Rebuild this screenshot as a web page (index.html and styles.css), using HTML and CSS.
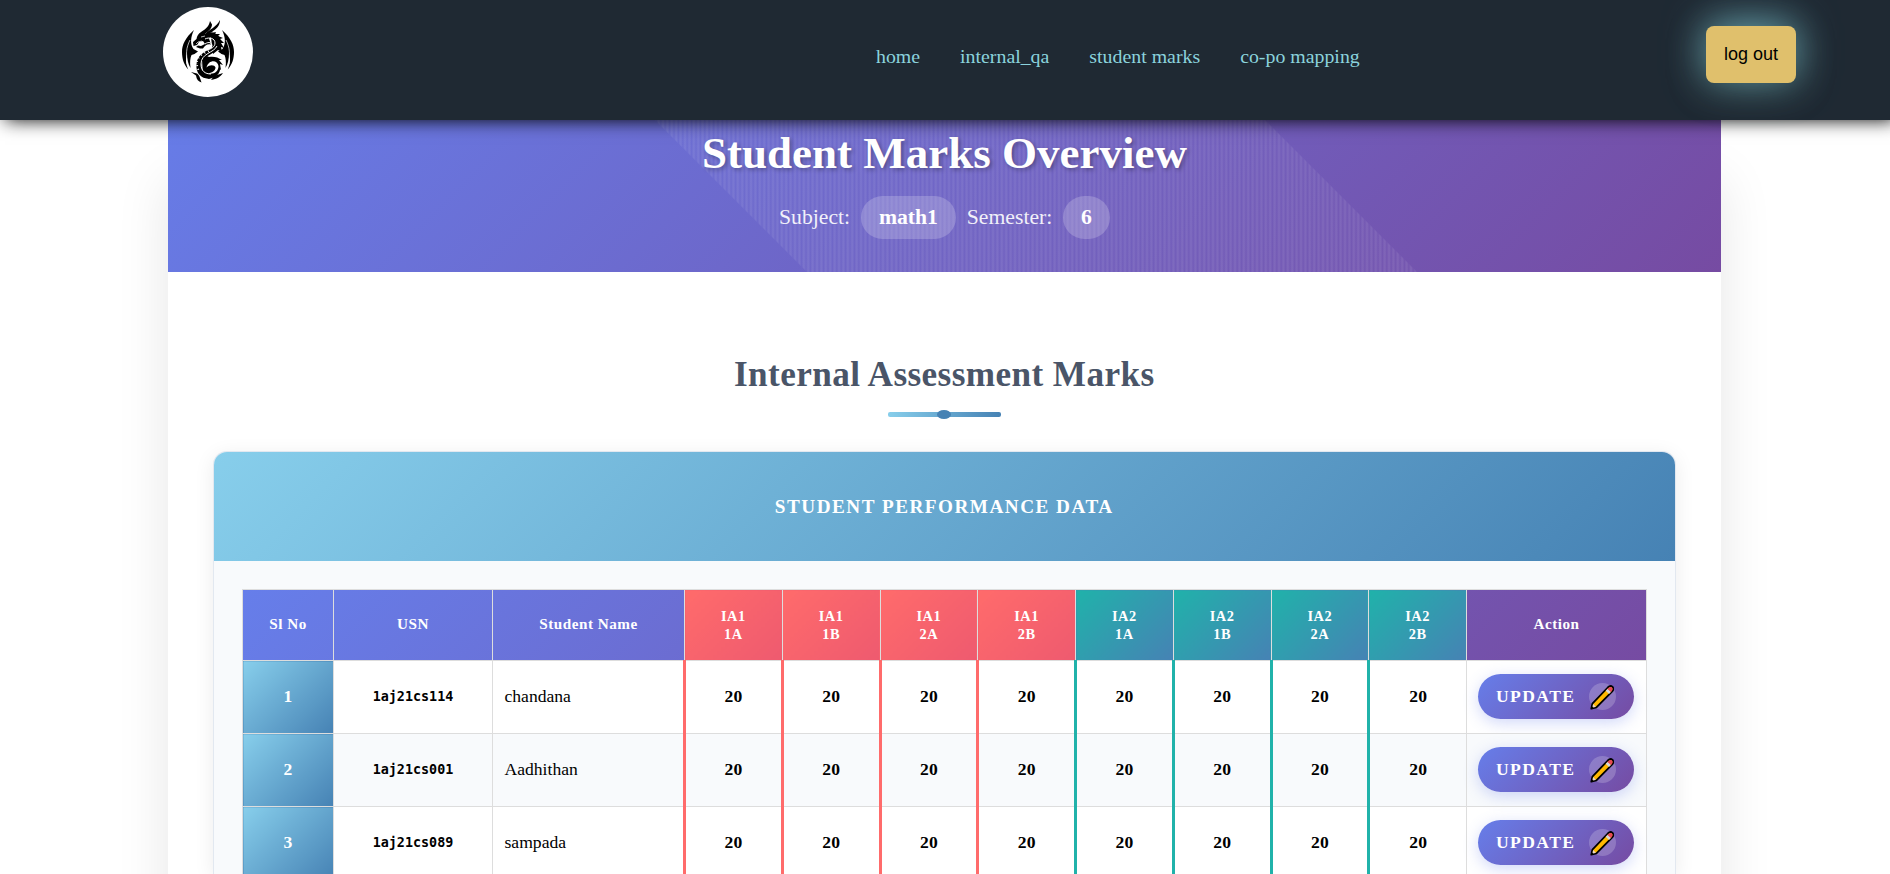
FILE: index.html
```html
<!DOCTYPE html>
<html lang="en">
<head>
<meta charset="utf-8">
<title>Student Marks Overview</title>
<link rel="stylesheet" href="styles.css">
</head>
<body>
<svg class="defs" width="0" height="0" aria-hidden="true">
  <symbol id="pencil" viewBox="0 0 24 25">
    <path d="M1.300 23.700 2.400 18.600 17.800 2.500C19.400 .9 21.300 .8 22.500 2s1.100 3-.5 4.600L6.400 22.400Z" fill="#ffb900" stroke="#000" stroke-width="1.800" stroke-linejoin="round"/>
    <path d="M3.100 18.900 5.900 21.800 2.200 22.900Z" fill="#ecd9c8"/>
    <path d="M1.400 23.700 2 21.200 3.900 23.100Z" fill="#000"/>
    <path d="m15.700 5.700 3.300 3.300 2-2-3.300-3.300Z" fill="#d8d8d8"/>
    <path d="M17.500 3.900c1.500-1.600 3.400-2.400 4.500-1.300s.6 2.900-.9 4.500Z" fill="#e74856"/>
  </symbol>
</svg>
<header class="topbar">
  <div class="logo">
    <svg viewBox="0 0 90 90" width="90" height="90">
      <g fill="#000">
        <path d="M31 23C22 31 19 38 19 45c0 7 2 13 6.300 17.500C22.500 56 22.500 52 24 46c0 6 1 11 3.500 15-.8-6-.3-10 1-13l3-1 3.500-2.500-4.500-2.500C27 37 27.500 30 31 23Z"/>
        <path d="M59 23C68 31 71 38 71 45c0 7-2 13-6.300 17.500C67.500 56 67.500 52 66 46c0 6-1 11-3.500 15 .8-6 .3-10-1-13l-3-1-3.500-2.500 4.500-2.500C63 37 62.500 30 59 23Z"/>
        <path d="M47 14c-1 5-4 8-9 11-3 2-4 4-4.500 7L30 35l.5 4 3.500-1 2-3 4-1 2 3-4 2-3-.5-2 1.500 4 1.500 3 0c2-3 4-5 8-4l-2-6 4-4-8-1c4-2 7-6 7-9Z"/>
        <path d="M57 13c0 6-4 9-8 12l-7 3 2-3c4-3 9-5 13-12Z"/>
        <path d="M48 26l5-1-1 2 5 0-2 2 5 2-3 1 4 4-3 0 3 5-3-1 1 5-4-2-5 4-2-17Z"/>
        <path d="M39 52l5-3 2 1c4-1 9 0 13 3l-3 0 4 5-3-1 1 6-3-2c0 5-4 9-10 11l1-2-6 0Z"/>
        <path d="M28 65l6 1.500c2 1 3 4 4.500 9-3-1-5-3-5.500-7Z"/>
        <path d="M60 66c-3 4-6 6-12 7l3-4Z"/>
      </g>
      <path d="M42 30c7-5 14 0 13 7-1 8-18 8-19 20-1 8 4 13 11 12 6-1 9-6 7-10-2-4-8-3-10 1" fill="none" stroke="#000" stroke-width="5"/>
      <path d="M42 37c4-3 7-1 7 2-1 2-3 3-5 4 4-1 8-3 8-7 0-5-6-6-10-4M54 39c-3 7-16 7-16 18 0 7 4 10 10 10" fill="none" stroke="#fff" stroke-width="1"/>
      <path d="M43.500 60.500c2-8 11-8 12-1.500 0 6-5 8.500-10 7.500 4-1 7-3 7-6-1-3-6-3-9 0Z" fill="#fff"/>
      <path d="M46 44c-8 3-12 7-12 12 0 4 1 7 3 9" fill="none" stroke="#fff" stroke-width="1.800" stroke-dasharray="1 3"/>
      <path d="M33 37l2-2 4-1M38 30l4-1M27 33c-4 8-4 14-3 24M63 33c4 8 4 14 3 24" fill="none" stroke="#fff" stroke-width=".7"/>
    </svg>
  </div>
  <nav class="nav">
    <a>home</a><a>internal_qa</a><a>student marks</a><a>co-po mapping</a>
  </nav>
  <button class="logout">log out</button>
</header>
<main class="page">
  <section class="banner">
    <h1>Student Marks Overview</h1>
    <div class="meta"><span>Subject:</span><b>math1</b><span>Semester:</span><b>6</b></div>
  </section>
  <section class="content">
    <h2>Internal Assessment Marks</h2>
    <div class="rule"><i></i></div>
    <div class="card">
      <h3>Student Performance Data</h3>
      <div class="table-wrap">
        <table>
          <colgroup><col class="c-no"><col class="c-usn"><col class="c-name"><col span="8" class="c-mark"><col class="c-action"></colgroup>
          <thead>
            <tr><th>Sl No</th><th>USN</th><th>Student Name</th>
              <th class="ia1">IA1<br>1A</th><th class="ia1">IA1<br>1B</th><th class="ia1">IA1<br>2A</th><th class="ia1">IA1<br>2B</th>
              <th class="ia2">IA2<br>1A</th><th class="ia2">IA2<br>1B</th><th class="ia2">IA2<br>2A</th><th class="ia2">IA2<br>2B</th>
              <th>Action</th></tr>
          </thead>
          <tbody>
            <tr><td class="no">1</td><td class="usn">1aj21cs114</td><td class="name">chandana</td>
              <td class="m1">20</td><td class="m1">20</td><td class="m1">20</td><td class="m1">20</td>
              <td class="m2">20</td><td class="m2">20</td><td class="m2">20</td><td class="m2">20</td>
              <td><button class="update">UPDATE<span><svg width="24" height="25"><use href="#pencil"/></svg></span></button></td></tr>
            <tr><td class="no">2</td><td class="usn">1aj21cs001</td><td class="name">Aadhithan</td>
              <td class="m1">20</td><td class="m1">20</td><td class="m1">20</td><td class="m1">20</td>
              <td class="m2">20</td><td class="m2">20</td><td class="m2">20</td><td class="m2">20</td>
              <td><button class="update">UPDATE<span><svg width="24" height="25"><use href="#pencil"/></svg></span></button></td></tr>
            <tr><td class="no">3</td><td class="usn">1aj21cs089</td><td class="name">sampada</td>
              <td class="m1">20</td><td class="m1">20</td><td class="m1">20</td><td class="m1">20</td>
              <td class="m2">20</td><td class="m2">20</td><td class="m2">20</td><td class="m2">20</td>
              <td><button class="update">UPDATE<span><svg width="24" height="25"><use href="#pencil"/></svg></span></button></td></tr>
          </tbody>
        </table>
      </div>
    </div>
  </section>
</main>
</body>
</html>
```
FILE: styles.css
```css
* { box-sizing: border-box; }
html, body { height: 874px; overflow: hidden; }
body { margin: 0; background: #fff; font-family: "Liberation Serif", "Times New Roman", serif; color: #000; }
h1, h2, h3 { margin: 0; }
.defs { display: block; }

.topbar {
  position: relative; z-index: 2;
  display: grid; grid-template-columns: 163px 90px 1fr 90px 94px;
  height: 120px; background: #1f2933;
  box-shadow: 5px 0 17px rgba(0, 0, 0, .95), 20px 0 17px -5px rgba(0, 0, 0, .1);
}
.logo { grid-column: 2; margin-top: 7px; width: 90px; height: 90px; border-radius: 50%; background: #fff; }
.logo svg { display: block; }
.nav { grid-column: 3; display: flex; gap: 40px; padding: 45px 0 0 623px; font-size: 19.850px; line-height: 23px; color: #8bd3dd; white-space: nowrap; }
.logout {
  grid-column: 4; margin-top: 26px; width: 90px; height: 57px; padding: 0; border: 0; border-radius: 8px;
  background: #e0c06c; color: #000; font: 18px "Liberation Sans", Arial, sans-serif;
  box-shadow: 0 -5px 40px rgba(125, 200, 215, .7), 0 4px 40px rgba(90, 130, 110, .3);
}

.page { width: 1553px; height: 754px; margin-left: 168px; background: #fff; box-shadow: 0 60px 50px rgba(0, 0, 0, .1); }
.banner {
  position: relative; height: 152px; color: #fff; text-align: center;
  background: linear-gradient(135deg, #667eea 0%, #764ba2 100%) 0 100% / 100% 216px;
}
/* striped diagonal sheen */
.banner::before {
  content: ""; position: absolute; inset: 0;
  clip-path: polygon(487px 0, 1097px 0, 1249px 152px, 639px 152px);
  background: repeating-linear-gradient(90deg, rgba(255, 255, 255, .01) 0, rgba(255, 255, 255, .09) 1.800px 2.600px, rgba(255, 255, 255, .01) 4.400px);
}
.banner h1 { position: relative; padding-top: 7px; font-size: 45px; line-height: 52px; text-shadow: 2px 2px 4px rgba(0, 0, 0, .3); }
.meta { position: relative; display: flex; justify-content: center; align-items: center; gap: 10.800px; margin-top: 17px; font-size: 21.700px; line-height: 25px; }
.meta span { opacity: .9; }
.meta b { padding: 9px 18px; border-radius: 22px; background: rgba(255, 255, 255, .2); }

.content { height: 602px; overflow: hidden; padding: 83px 45.500px 0 45px; }
h2 { font-size: 35.200px; line-height: 40px; letter-spacing: .4px; text-align: center; color: #4a5568; }
.rule { display: flex; align-items: center; justify-content: center; width: 113px; height: 5px; margin: 17px auto 34px; border-radius: 2px; background: linear-gradient(90deg, #87ceeb, #4682b4); }
.rule i { flex: none; width: 14px; height: 9px; border-radius: 50%; background: #4682b4; }
.card { height: 423px; border: 1px solid #e2e8f0; border-bottom: 0; border-radius: 14px 14px 0 0; overflow: hidden; background: #f8fafc; box-shadow: 0 4px 20px rgba(0, 0, 0, .08); }
h3 { height: 109px; font-size: 19.200px; line-height: 109px; letter-spacing: 1.500px; text-transform: uppercase; text-align: center; color: #fff; background: linear-gradient(135deg, #87ceeb, #4682b4); }
.table-wrap { padding: 28px 27px 0 28px; }
table { width: 1405px; table-layout: fixed; border-collapse: collapse; background: #fff; }
.c-no { width: 91px; }
.c-usn { width: 159px; }
.c-name { width: 192px; }
.c-mark { width: 97.750px; }
.c-action { width: 180px; }
th, td { padding: 0 0 2px; border: 1px solid #ddd; text-align: center; }
thead tr { height: 71px; background: linear-gradient(135deg, #667eea, #764ba2); }
th { font-size: 15.200px; line-height: 18px; letter-spacing: .5px; color: #fff; }
th.ia1, th.ia2 { padding: 0; font-size: 14.400px; }
.ia1 { background: linear-gradient(135deg, #ff6b6b, #ee5a6f); }
.ia2 { background: linear-gradient(135deg, #20b2aa, #4682b4); }
tbody tr { height: 73px; font-size: 17.600px; }
tbody tr:nth-child(even) { background: #f8fafc; }
.no { font-weight: bold; color: #fff; background: linear-gradient(135deg, #87ceeb, #4682b4); }
.usn { font: bold 13.400px "DejaVu Sans Mono", monospace; }
.name { padding-left: 11.500px; text-align: left; }
.m1, .m2 { font-weight: bold; }
.m1 { border-left: 3px solid #ff6b6b; }
.m2 { border-left: 3px solid #20b2aa; }
.update {
  display: flex; align-items: center; justify-content: space-between; width: 156px; height: 45px; margin: 0 0 0 11px; padding: 0 18px 0 18px;
  border: 0; border-radius: 23px; color: #fff; font: bold 17.600px "Liberation Serif", serif; letter-spacing: 1.400px;
  background: linear-gradient(135deg, #667eea, #764ba2); box-shadow: 0 4px 15px rgba(102, 126, 234, .3);
}
.update span { display: flex; width: 27px; height: 27px; padding: 2px 0 0 1px; border-radius: 50%; background: rgba(255, 255, 255, .2); }
.update svg { flex: none; }
```
